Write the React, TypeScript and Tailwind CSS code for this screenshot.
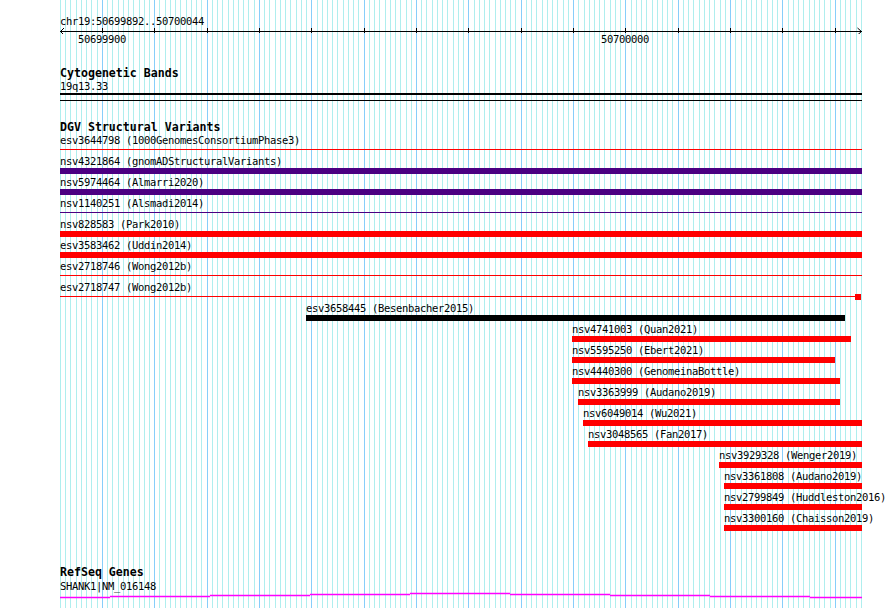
import React from "react";

const START = 50699892;
const BP = 153;
const PX_PER_BP = 5.235;
const X0 = 60;

type Feature = {
  label: string;
  labelX: number;
  x1: number;
  x2: number;
  color: string;
  thin?: boolean;
  endBox?: [number, number];
};

const PURPLE = "#4b0082";
const RED = "#ff0000";

const features: Feature[] = [
  { label: "esv3644798 (1000GenomesConsortiumPhase3)", labelX: 60, x1: 60, x2: 862, color: RED, thin: true },
  { label: "nsv4321864 (gnomADStructuralVariants)", labelX: 60, x1: 60, x2: 862, color: PURPLE },
  { label: "nsv5974464 (Almarri2020)", labelX: 60, x1: 60, x2: 862, color: PURPLE },
  { label: "nsv1140251 (Alsmadi2014)", labelX: 60, x1: 60, x2: 862, color: PURPLE, thin: true },
  { label: "nsv828583 (Park2010)", labelX: 60, x1: 60, x2: 862, color: RED },
  { label: "esv3583462 (Uddin2014)", labelX: 60, x1: 60, x2: 862, color: RED },
  { label: "esv2718746 (Wong2012b)", labelX: 60, x1: 60, x2: 862, color: RED, thin: true },
  { label: "esv2718747 (Wong2012b)", labelX: 60, x1: 60, x2: 855, color: RED, thin: true, endBox: [855, 861] },
  { label: "esv3658445 (Besenbacher2015)", labelX: 306, x1: 306, x2: 845, color: "#000000" },
  { label: "nsv4741003 (Quan2021)", labelX: 572, x1: 572, x2: 851, color: RED },
  { label: "nsv5595250 (Ebert2021)", labelX: 572, x1: 572, x2: 835, color: RED },
  { label: "nsv4440300 (GenomeinaBottle)", labelX: 572, x1: 572, x2: 840, color: RED },
  { label: "nsv3363999 (Audano2019)", labelX: 578, x1: 578, x2: 840, color: RED },
  { label: "nsv6049014 (Wu2021)", labelX: 583, x1: 583, x2: 862, color: RED },
  { label: "nsv3048565 (Fan2017)", labelX: 588, x1: 588, x2: 862, color: RED },
  { label: "nsv3929328 (Wenger2019)", labelX: 719, x1: 719, x2: 862, color: RED },
  { label: "nsv3361808 (Audano2019)", labelX: 724, x1: 724, x2: 862, color: RED },
  { label: "nsv2799849 (Huddleston2016)", labelX: 724, x1: 724, x2: 862, color: RED },
  { label: "nsv3300160 (Chaisson2019)", labelX: 724, x1: 724, x2: 862, color: RED },
];

const gridLines = Array.from({ length: BP + 1 }, (_, k) => ({
  x: Math.round(X0 + k * PX_PER_BP) + 0.5,
  major: (START + k) % 10 === 0,
}));

const geneSegments: [number, number, number][] = [
  [60, 110, 597],
  [110, 210, 596],
  [210, 310, 595],
  [310, 410, 594],
  [410, 510, 593],
  [510, 610, 594],
  [610, 710, 595],
  [710, 810, 596],
  [810, 862, 597],
];

function Grid() {
  return (
    <svg className="absolute inset-0 pointer-events-none" width={890} height={608}>
      {gridLines.map((g, i) => (
        <line
          key={i}
          x1={g.x}
          x2={g.x}
          y1={0}
          y2={608}
          stroke={g.major ? "#87cefa" : "#afeeee"}
          strokeWidth={1}
        />
      ))}
    </svg>
  );
}

function Ruler() {
  const majors = gridLines.filter((g) => g.major);
  return (
    <svg width={802} height={7} className="block">
      <line x1={0} x2={802} y1={4.5} y2={4.5} stroke="#000" strokeWidth={1} />
      {majors.map((g, i) => (
        <line key={i} x1={g.x - 60} x2={g.x - 60} y1={1} y2={6} stroke="#000" strokeWidth={1} />
      ))}
      <polyline points="4,1 0.5,4.5 4,8" fill="none" stroke="#000" strokeWidth={1} />
      <polyline points="797.5,1 801.5,4.5 797.5,8" fill="none" stroke="#000" strokeWidth={1} />
    </svg>
  );
}

function FeatureRow({ f }: { f: Feature }) {
  return (
    <div className="relative h-[21px]">
      <div
        className="absolute top-0 text-[10.5px] leading-[11px] tracking-[-0.32px] whitespace-nowrap text-black"
        style={{ left: f.labelX - 60 }}
      >
        {f.label}
      </div>
      {f.thin ? (
        <div
          className="absolute top-[14px] h-px"
          style={{ left: f.x1 - 60, width: f.x2 - f.x1, backgroundColor: f.color }}
        />
      ) : (
        <div
          className="absolute top-[12px] h-[6px]"
          style={{ left: f.x1 - 60, width: f.x2 - f.x1, backgroundColor: f.color }}
        />
      )}
      {f.endBox && (
        <div
          className="absolute top-[12px] h-[6px]"
          style={{ left: f.endBox[0] - 60, width: f.endBox[1] - f.endBox[0], backgroundColor: f.color }}
        />
      )}
    </div>
  );
}

export default function App() {
  return (
    <div className="relative w-[890px] h-[608px] overflow-hidden bg-white font-['DejaVu_Sans_Mono',monospace] text-black">
      <Grid />
      <div className="relative flex flex-col w-[862px] pl-[60px]">
        <div className="mt-[16px] h-[11px] text-[10.5px] leading-[11px] tracking-[-0.32px] whitespace-nowrap">
          chr19:50699892..50700044
        </div>
        <Ruler />
        <div className="relative h-[11px] text-[10.5px] leading-[11px] tracking-[-0.32px]">
          <span className="absolute top-0 left-[18px]">50699900</span>
          <span className="absolute top-0 left-[541px]">50700000</span>
        </div>

        <div className="mt-[23px] h-[11px] text-[11.6px] leading-[11px] font-bold whitespace-nowrap">
          Cytogenetic Bands
        </div>
        <div className="mt-[2px] h-[11px] text-[10.5px] leading-[11px] tracking-[-0.32px]">19q13.33</div>
        <div className="mt-px h-[8px] border-t-2 border-b border-black" />

        <div className="mt-[21px] h-[11px] text-[11.6px] leading-[11px] font-bold whitespace-nowrap">
          DGV Structural Variants
        </div>
        <div className="mt-[2px] flex flex-col">
          {features.map((f, i) => (
            <FeatureRow key={i} f={f} />
          ))}
        </div>

        <div className="mt-[33px] h-[11px] text-[11.6px] leading-[11px] font-bold whitespace-nowrap">
          RefSeq Genes
        </div>
        <div className="mt-[3px] h-[10px] text-[10.5px] leading-[10px] tracking-[-0.32px] whitespace-nowrap">
          SHANK1|NM_016148
        </div>
        <svg width={802} height={8} className="block">
          {geneSegments.map(([a, b, y], i) => (
            <line key={i} x1={a - 60} x2={b - 60} y1={y - 591 + 0.5} y2={y - 591 + 0.5} stroke="#ff00ff" strokeWidth={1.5} />
          ))}
        </svg>
      </div>
    </div>
  );
}
